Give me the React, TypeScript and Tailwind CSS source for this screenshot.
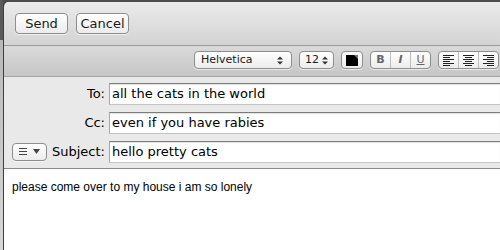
import type { FC, ReactNode } from "react"

const ui = { fontFamily: '"DejaVu Sans", "Liberation Sans", sans-serif' }
const helv = { fontFamily: '"Liberation Sans", Arial, sans-serif' }

// tiny up/down arrows used by the popup buttons
const Stepper: FC = () => (
	<svg width="6" height="9" viewBox="0 0 6 9" className="shrink-0">
		<path d="M0 3.5 L3 0.5 L6 3.5 Z" fill="#333" />
		<path d="M0 5.5 L3 8.5 L6 5.5 Z" fill="#333" />
	</svg>
)

const AlignIcon: FC<{ kind: "left" | "center" | "right" }> = ({ kind }) => {
	const rows = [0, 1, 2, 3, 4, 5]
	return (
		<svg width="11" height="11" viewBox="0 0 11 11">
			{rows.map(i => {
				const width = i % 2 === 0 ? 11 : 7
				const x = kind === "left" ? 0 : kind === "right" ? 11 - width : (11 - width) / 2
				return <rect key={i} x={x} y={i * 2} width={width} height="1" fill="#222" />
			})}
		</svg>
	)
}

const Btn: FC<{ children: ReactNode; className?: string }> = ({ children, className }) => (
	<div
		className={`flex items-center rounded-[4px] border border-[#8e8e8e] bg-gradient-to-b from-[#ffffff] to-[#ececec] shadow-[0_1px_0_rgba(255,255,255,0.6)] ${className ?? "justify-center"}`}
	>
		{children}
	</div>
)

const HeaderRow: FC<{ label: string; value: string; left?: ReactNode }> = ({ label, value, left }) => (
	<div className="flex h-[29px] items-center">
		<div className="flex w-[105px] shrink-0 items-center justify-end gap-[4px] pr-[4px]">
			{left}
			<span className="text-[13px] text-black">{label}</span>
		</div>
		<div className="flex h-[22px] flex-1 items-center border-t border-l border-t-[#7c7c7c] border-l-[#a8a8a8] border-b border-b-[#c4c4c4] bg-white pl-[2px] shadow-[inset_0_1px_1px_rgba(0,0,0,0.12)]">
			<span className="text-[13px] text-black">{value}</span>
		</div>
	</div>
)

export default function App() {
	return (
		<div className="flex h-[250px] w-[500px] overflow-hidden bg-[#4b4b4b]" style={ui}>
			{/* sliver of the desktop / window behind */}
			<div className="flex w-[3px] shrink-0 flex-col">
				<div className="h-[40px] bg-[#5a5a5a]" />
				<div className="flex-1 bg-gradient-to-b from-[#b8b8b8] to-[#d8d8d8]" />
			</div>

			<div className="mt-[2px] flex flex-1 flex-col overflow-hidden rounded-tl-[5px] border-l border-[#3e3e3e]">
				{/* top toolbar */}
				<div className="flex h-[44px] shrink-0 items-center gap-[8px] border-b border-[#9a9a9a] bg-gradient-to-b from-[#ebebeb] to-[#d3d3d3] pl-[11px]">
					<Btn className="h-[21px] w-[53px] justify-center">
						<span className="text-[13px] text-[#1a1a1a]">Send</span>
					</Btn>
					<Btn className="h-[21px] w-[53px] justify-center">
						<span className="text-[13px] text-[#1a1a1a]">Cancel</span>
					</Btn>
				</div>

				{/* format bar */}
				<div className="flex h-[31px] shrink-0 items-start justify-end gap-[7px] border-b border-[#a4a4a4] bg-gradient-to-b from-[#dadada] to-[#c6c6c6] pr-[1px] pt-[5px]">
					<Btn className="h-[18px] w-[98px] justify-between pl-[6px] pr-[8px]">
						<span className="text-[11px] text-[#1a1a1a]">Helvetica</span>
						<Stepper />
					</Btn>
					<Btn className="h-[18px] w-[35px] justify-center gap-[3px]">
						<span className="text-[11px] text-[#1a1a1a]">12</span>
						<Stepper />
					</Btn>
					<Btn className="h-[18px] w-[22px] justify-center">
						<div className="relative h-[11px] w-[12px] bg-black">
							<div className="absolute right-0 top-0 h-0 w-0 border-l-[4px] border-t-[4px] border-l-transparent border-t-[#777]" />
						</div>
					</Btn>
					<Btn className="h-[18px] w-[61px] justify-center overflow-hidden">
						<div className="flex h-full flex-1 items-center justify-center border-r border-[#bdbdbd]">
							<span className="text-[11px] font-bold text-[#666]">B</span>
						</div>
						<div className="flex h-full flex-1 items-center justify-center border-r border-[#bdbdbd]">
							<span className="text-[11px] font-bold italic text-[#666]">I</span>
						</div>
						<div className="flex h-full flex-1 items-center justify-center">
							<span className="text-[11px] text-[#666] underline">U</span>
						</div>
					</Btn>
					<Btn className="h-[18px] w-[61px] justify-center overflow-hidden">
						<div className="flex h-full flex-1 items-center justify-center border-r border-[#bdbdbd]">
							<AlignIcon kind="left" />
						</div>
						<div className="flex h-full flex-1 items-center justify-center border-r border-[#bdbdbd]">
							<AlignIcon kind="center" />
						</div>
						<div className="flex h-full flex-1 items-center justify-center">
							<AlignIcon kind="right" />
						</div>
					</Btn>
				</div>

				{/* address fields */}
				<div className="flex shrink-0 flex-col border-b border-[#8a8a8a] bg-[#e9e9e9] pb-[2px] pt-[2px]">
					<HeaderRow label="To:" value="all the cats in the world" />
					<HeaderRow label="Cc:" value="even if you have rabies" />
					<HeaderRow
						label="Subject:"
						value="hello pretty cats"
						left={
							<Btn className="mr-[1px] h-[18px] w-[35px] justify-center gap-[6px]">
								<svg width="8" height="7" viewBox="0 0 8 7">
									<rect x="0" y="0" width="8" height="1" fill="#444" />
									<rect x="0" y="3" width="8" height="1" fill="#444" />
									<rect x="0" y="6" width="8" height="1" fill="#444" />
								</svg>
								<svg width="7" height="5" viewBox="0 0 7 5">
									<path d="M0 0 L7 0 L3.5 5 Z" fill="#444" />
								</svg>
							</Btn>
						}
					/>
				</div>

				{/* message body */}
				<div className="flex-1 bg-white px-[8px] pt-[11px]">
					<p className="text-[12px] leading-[15px] text-black" style={helv}>
						please come over to my house i am so lonely
					</p>
				</div>
			</div>
		</div>
	)
}
